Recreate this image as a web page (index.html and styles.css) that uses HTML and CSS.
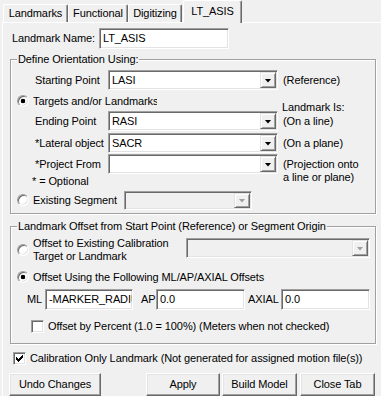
FILE: index.html
```html
<!DOCTYPE html>
<html>
<head>
    <title>Landmark Editor</title>
    <link rel="stylesheet" href="styles.css">
</head>
<body>
    <div class="tab-strip">
        <div class="tab tab-landmarks">Landmarks</div>
        <div class="tab tab-functional">Functional</div>
        <div class="tab tab-digitizing">Digitizing</div>
        <div class="tab tab-current active">LT_ASIS</div>
    </div>
    <div class="tab-panel">
        <div class="name-row">
            <span class="name-label">Landmark Name:</span>
            <div class="edit name-edit">LT_ASIS</div>
        </div>

        <!-- orientation -->
        <div class="group orient-group">
            <span class="group-title">Define Orientation Using:</span>
            <div class="point-row starting-row">
                <span class="point-label">Starting Point</span>
                <div class="combo point-combo"><span class="combo-text">LASI</span><span class="drop"></span></div>
                <span class="note">(Reference)</span>
            </div>
            <div class="radio-row targets-row">
                <span class="radio checked"></span>
                <span class="radio-text targets-text">Targets and/or Landmarks</span>
                <span class="landmark-is">Landmark Is:</span>
            </div>
            <div class="point-row ending-row">
                <span class="point-label">Ending Point</span>
                <div class="combo point-combo"><span class="combo-text">RASI</span><span class="drop"></span></div>
                <span class="note">(On a line)</span>
            </div>
            <div class="point-row lateral-row">
                <span class="point-label">*Lateral object</span>
                <div class="combo point-combo"><span class="combo-text">SACR</span><span class="drop"></span></div>
                <span class="note">(On a plane)</span>
            </div>
            <div class="point-row project-row">
                <span class="point-label">*Project From</span>
                <div class="combo point-combo"><span class="combo-text"></span><span class="drop"></span></div>
                <span class="note note-tall">(Projection onto<br>a line or plane)</span>
            </div>
            <div class="optional-row">* = Optional</div>
            <div class="radio-row existing-row">
                <span class="radio"></span>
                <span class="radio-text existing-text">Existing Segment</span>
                <div class="combo disabled segment-combo"><span class="combo-text"></span><span class="drop"></span></div>
            </div>
        </div>

        <!-- offsets -->
        <div class="group offset-group">
            <span class="group-title">Landmark Offset from Start Point (Reference) or Segment Origin</span>
            <div class="radio-row calib-row">
                <span class="radio"></span>
                <span class="radio-text calib-text">Offset to Existing Calibration<br>Target or Landmark</span>
                <div class="combo disabled calib-combo"><span class="combo-text"></span><span class="drop"></span></div>
            </div>
            <div class="radio-row using-row">
                <span class="radio checked"></span>
                <span class="radio-text">Offset Using the Following ML/AP/AXIAL Offsets</span>
            </div>
            <div class="offsets-row">
                <span class="off-label ml-label">ML</span>
                <div class="edit off-edit ml-edit">-MARKER_RADIUS</div>
                <span class="off-label ap-label">AP</span>
                <div class="edit off-edit">0.0</div>
                <span class="off-label axial-label">AXIAL</span>
                <div class="edit off-edit">0.0</div>
            </div>
            <div class="check-row percent-row">
                <span class="check"></span>
                <span class="check-text">Offset by Percent (1.0 = 100%) (Meters when not checked)</span>
            </div>
        </div>

        <div class="check-row calib-only-row">
            <span class="check"><svg width="7" height="7" viewBox="0 0 7 7" shape-rendering="crispEdges"><polygon points="0,2 2,4 7,0 7,2 2,7 0,5" fill="#000"/></svg></span>
            <span class="check-text">Calibration Only Landmark (Not generated for assigned motion file(s))</span>
        </div>

        <div class="button-row">
            <div class="button undo-button">Undo Changes</div>
            <div class="button apply-button">Apply</div>
            <div class="button build-button">Build Model</div>
            <div class="button close-button">Close Tab</div>
        </div>
    </div>
</body>
</html>
```

FILE: styles.css
```css
body {
    margin: 0;
    width: 381px;
    height: 396px;
    overflow: hidden;
    background: #f0f0f0;
    font-family: "Liberation Sans", Arial, sans-serif;
    font-size: 11px;
    line-height: 13px;
    letter-spacing: -0.1px;
    color: #000;
}

/* tabs */
.tab-strip {
    display: flex;
    align-items: flex-end;
    height: 22px;
    padding-left: 3px;
}
.tab {
    box-sizing: border-box;
    height: 18px;
    padding-top: 2px;
    text-align: center;
    border-top: 1px solid #fff;
    border-left: 1px solid #fff;
    border-right: 1px solid #696969;
    border-radius: 2px 2px 0 0;
    box-shadow: inset -1px 0 #a0a0a0;
}
.tab-landmarks {
    width: 65px;
}
.tab-functional {
    width: 60px;
}
.tab-digitizing {
    width: 54px;
}
.tab-current {
    width: 59px;
    margin-left: 1px;
}
.tab.active {
    position: relative;
    z-index: 1;
    height: 23px;
    margin-bottom: -1px;
    padding-top: 4px;
    background: #f0f0f0;
}
.tab-panel {
    height: 374px;
    margin-left: 2px;
    border-top: 1px solid #fff;
    border-left: 1px solid #fff;
}

/* shared controls */
.edit {
    box-sizing: border-box;
    height: 21px;
    padding: 3px 0 0 3px;
    background: #fff;
    border: 1px solid;
    border-color: #a0a0a0 #fff #fff #a0a0a0;
    box-shadow: inset 1px 1px #696969, inset -1px -1px #e3e3e3;
    white-space: nowrap;
    overflow: hidden;
}
.combo {
    display: flex;
    box-sizing: border-box;
    height: 20px;
    padding: 1px;
    background: #fff;
    border: 1px solid;
    border-color: #a0a0a0 #fff #fff #a0a0a0;
    box-shadow: inset 1px 1px #696969, inset -1px -1px #e3e3e3;
}
.combo-text {
    flex: 1;
    padding: 2px 0 0 2px;
    overflow: hidden;
    white-space: nowrap;
}
.drop {
    display: flex;
    align-items: center;
    justify-content: center;
    box-sizing: border-box;
    width: 16px;
    background: #f0f0f0;
    border: 1px solid;
    border-color: #e3e3e3 #696969 #696969 #e3e3e3;
    box-shadow: inset 1px 1px #fff, inset -1px -1px #a0a0a0;
}
.drop::after {
    content: "";
    width: 7px;
    height: 4px;
    margin-top: 1px;
    background: #000;
    clip-path: polygon(0 0, 100% 0, 50% 100%);
}
.combo.disabled {
    background: #f0f0f0;
}
.combo.disabled .drop::after {
    background: #a0a0a0;
}
.radio {
    flex: none;
    box-sizing: border-box;
    width: 12px;
    height: 12px;
    border-radius: 50%;
    border: 1px solid;
    border-color: #a0a0a0 #fff #fff #a0a0a0;
    background: #fff;
    box-shadow: inset 1px 1px #696969, inset -1px -1px #e3e3e3;
}
.radio.checked {
    background: radial-gradient(circle, #000 0 2px, #fff 2.6px);
}
.check {
    display: flex;
    align-items: center;
    justify-content: center;
    flex: none;
    box-sizing: border-box;
    width: 13px;
    height: 13px;
    background: #fff;
    border: 1px solid;
    border-color: #a0a0a0 #fff #fff #a0a0a0;
    box-shadow: inset 1px 1px #696969, inset -1px -1px #e3e3e3;
}
.button {
    box-sizing: border-box;
    height: 23px;
    padding-top: 4px;
    text-align: center;
    background: #f0f0f0;
    border: 1px solid;
    border-color: #fff #696969 #696969 #fff;
    box-shadow: inset -1px -1px #a0a0a0, inset 1px 1px #e3e3e3;
}

/* name */
.name-row {
    display: flex;
    align-items: center;
    margin-top: 5px;
    padding-left: 9px;
}
.name-label {
    width: 87px;
}
.name-edit {
    width: 130px;
}

/* group boxes */
.group {
    box-sizing: border-box;
    width: 366px;
    margin-left: 7px;
    border: 1px solid #a0a0a0;
    box-shadow: inset 1px 1px #fff, 1px 1px #fff;
}
.group-title {
    display: block;
    width: fit-content;
    margin: -7px 0 0 6px;
    padding: 0 1px;
    background: #f0f0f0;
}
.orient-group {
    height: 155px;
    margin-top: 10px;
}
.offset-group {
    height: 118px;
    margin-top: 12px;
}
.point-row {
    display: flex;
    align-items: center;
    height: 20px;
    padding-left: 24px;
}
.point-label {
    width: 73px;
    white-space: nowrap;
}
.point-combo {
    width: 170px;
}
.note {
    margin-left: 5px;
    white-space: nowrap;
}
.note-tall {
    align-self: flex-start;
    margin-top: 4px;
}
.starting-row {
    margin-top: 4px;
}
.ending-row {
    margin-top: 3px;
}
.lateral-row {
    margin-top: 2px;
}
.project-row {
    margin-top: 1px;
}
.radio-row {
    display: flex;
    align-items: center;
    padding-left: 6px;
}
.radio-text {
    margin-left: 4px;
    white-space: nowrap;
}
.targets-row {
    height: 14px;
    margin-top: 4px;
}
.targets-text {
    width: 124px;
    overflow: hidden;
}
.landmark-is {
    align-self: flex-end;
    margin: 0 0 -6px 125px;
    white-space: nowrap;
}
.optional-row {
    margin-top: 1px;
    padding-left: 21px;
}
.existing-row {
    height: 20px;
    margin-top: 2px;
}
.existing-text {
    width: 91px;
}
.segment-combo {
    width: 128px;
    height: 19px;
}
.calib-row {
    align-items: center;
    margin-top: 4px;
    height: 26px;
}
.calib-text {
    width: 153px;
}
.calib-combo {
    align-self: flex-start;
    width: 184px;
    margin-top: 1px;
}
.using-row {
    height: 14px;
    margin-top: 7px;
}
.offsets-row {
    display: flex;
    align-items: center;
    margin-top: 5px;
    padding-left: 16px;
}
.off-label {
    white-space: nowrap;
}
.ml-label {
    width: 18px;
}
.ap-label {
    width: 15px;
    margin-left: 8px;
}
.axial-label {
    width: 33px;
    margin-left: 3px;
}
.off-edit {
    width: 89px;
}
.ml-edit {
    width: 88px;
}
.check-row {
    display: flex;
    align-items: center;
}
.check-text {
    margin-left: 4px;
    white-space: nowrap;
}
.percent-row {
    margin-top: 10px;
    padding-left: 20px;
}
.calib-only-row {
    margin-top: 8px;
    padding-left: 10px;
}

/* buttons */
.button-row {
    display: flex;
    margin-top: 8px;
    padding-left: 6px;
}
.undo-button {
    width: 92px;
}
.apply-button {
    width: 74px;
    margin-left: 45px;
}
.build-button {
    width: 75px;
    margin-left: 2px;
}
.close-button {
    width: 75px;
    margin-left: 3px;
}
```
